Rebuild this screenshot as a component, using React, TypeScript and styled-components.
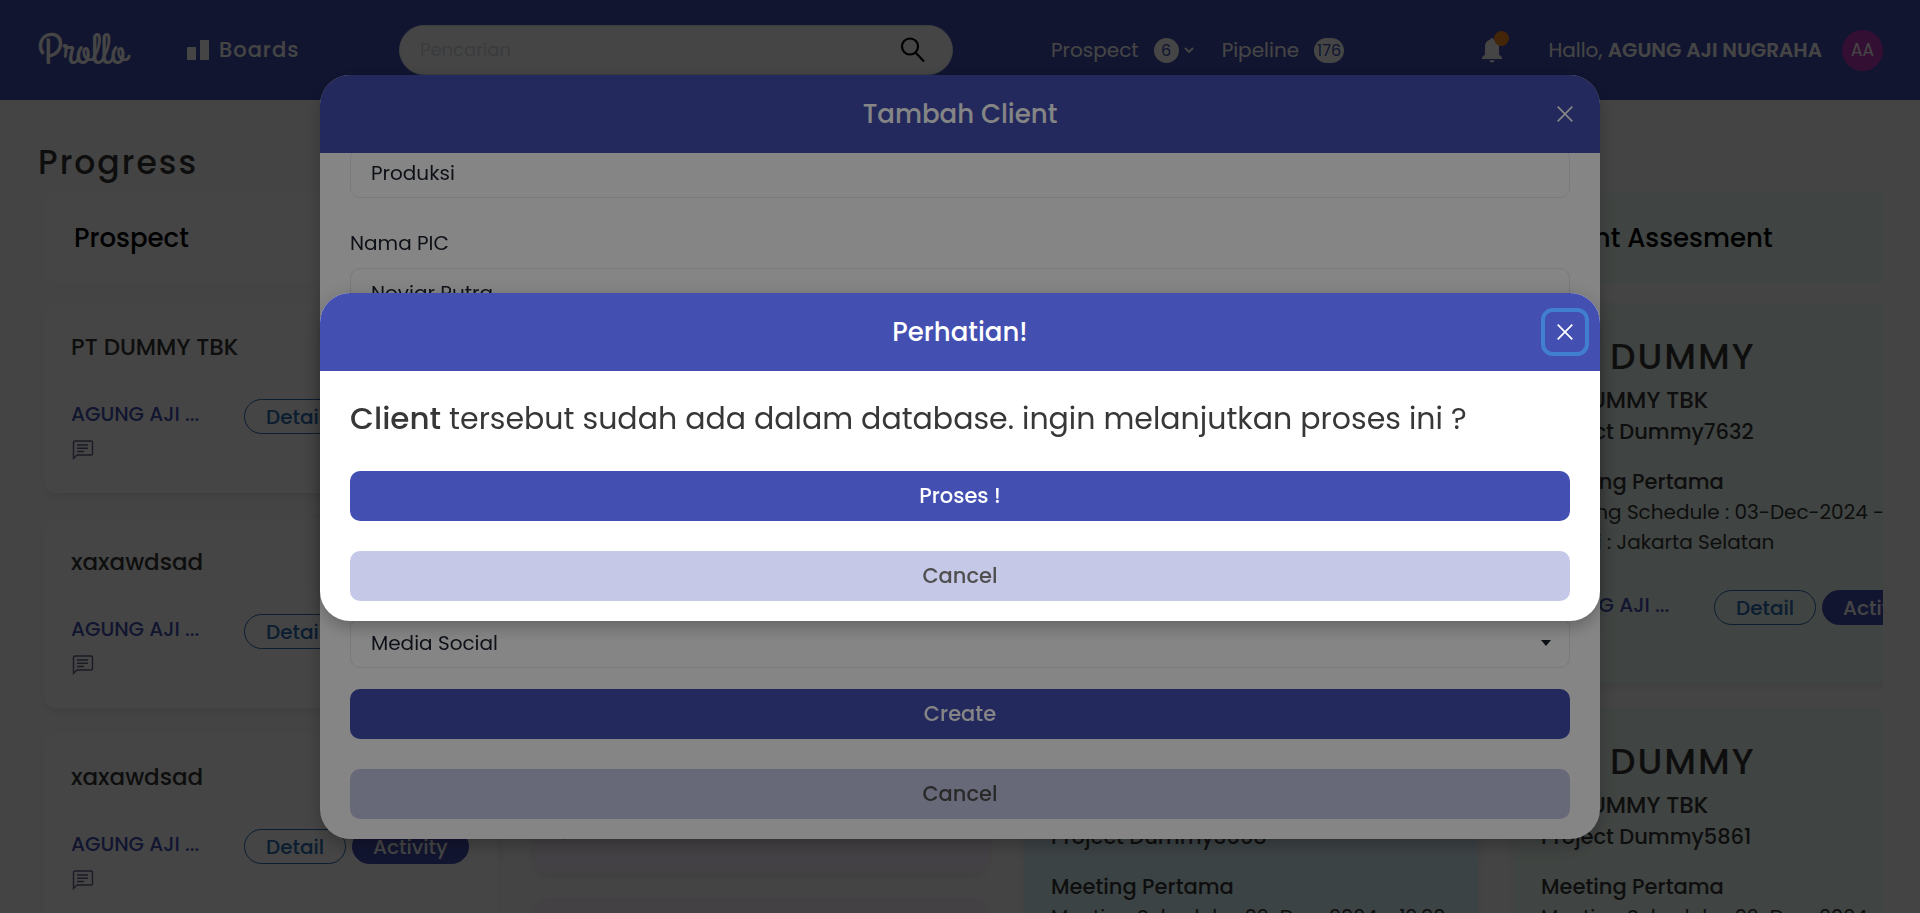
import React from "react";
import styled, { createGlobalStyle, css } from "styled-components";

const GlobalStyle = createGlobalStyle`
  * { box-sizing: border-box; }
  html, body { margin: 0; height: 100%; }
  body {
    overflow: hidden;
    background: #fcfcfc;
    color: #373737;
    font-family: Poppins, Inter, "Liberation Sans", sans-serif;
    font-size: 20px;
    line-height: 30px;
  }
  h1, h2, h3, p { margin: 0; font-weight: 400; }
  button, input, select { font: inherit; color: inherit; }
  button { cursor: pointer; }
  a { color: inherit; text-decoration: none; }
`;

const Page = styled.div`
  height: 100vh;
  overflow: hidden;
`;

const TopBar = styled.header`
  display: flex;
  align-items: center;
  height: 100px;
  padding: 0 37px 0 38px;
  background: #4350b1;
  color: #fff;
`;

const Logo = styled.a`
  width: 149px;
  padding-top: 4px;
  font-family: "Grand Hotel", Norican, Cookie, Satisfy, "Dancing Script", Pacifico, "Liberation Serif", serif;
  font-weight: 400;
  font-size: 43px;
  line-height: 48px;
`;

const BoardsLink = styled.a`
  display: flex;
  align-items: center;
  gap: 10px;
  width: 212px;
  font-size: 21px;
  font-weight: 500;
  letter-spacing: 1px;
`;

const Search = styled.form`
  display: flex;
  align-items: center;
  flex: 0 1 554px;
  height: 50px;
  padding: 0 26px 0 20px;
  border: 1px solid #e2e8f0;
  border-radius: 25px;
  background: #fff;
  color: #000;
`;

const SearchInput = styled.input`
  flex: 1;
  min-width: 0;
  padding: 0;
  border: 0;
  outline: 0;
  background: transparent;
  font-size: 18px;
  &::placeholder { color: #d4dae2; opacity: 1; }
`;

const IconButton = styled.button`
  position: relative;
  display: flex;
  padding: 0;
  border: 0;
  background: transparent;
`;

const Counters = styled.nav`
  display: flex;
  align-items: center;
  gap: 28px;
  margin-left: 98px;
`;

const Counter = styled.a`
  display: flex;
  align-items: center;
`;

const Count = styled.span`
  min-width: 25px;
  margin: 0 5px 0 15px;
  padding: 0 3px;
  border-radius: 13px;
  background: #fff;
  color: #4350b1;
  font-size: 16px;
  line-height: 25px;
  text-align: center;
`;

const Account = styled.div`
  display: flex;
  align-items: center;
  gap: 20px;
  margin-left: auto;
  white-space: nowrap;
  b { font-weight: 600; }
`;

const Bell = styled(IconButton)`
  margin-right: 26px;
`;

const Dot = styled.span`
  position: absolute;
  top: -7px;
  right: -7px;
  width: 15px;
  height: 15px;
  border-radius: 50%;
  background: #f68b1f;
`;

const Avatar = styled.span`
  width: 41px;
  border-radius: 50%;
  background: #c038c0;
  font-size: 17px;
  line-height: 41px;
  text-align: center;
`;

const Main = styled.main`
  padding: 38px 37px 0 38px;
`;

const PageTitle = styled.h1`
  font-size: 33px;
  line-height: 50px;
  font-weight: 500;
  letter-spacing: 2px;
`;

const Board = styled.div`
  display: flex;
  gap: 36px;
  padding: 5px 6px 20px;
  overflow: hidden;
`;

const Column = styled.section`
  flex: 0 0 454px;
  display: flex;
  flex-direction: column;
  gap: 25px;
`;

type Tone = "plain" | "lilac" | "sky" | "mint";
const tones: Record<Tone, string> = {
  plain: "#ffffff",
  lilac: "#faf2ff",
  sky: "#dff8ff",
  mint: "#edfbf4",
};

const ColumnTitle = styled.h2<{ $tone: Tone }>`
  margin-bottom: -5px;
  padding: 0 30px;
  border-radius: 12px;
  background: ${(p) => tones[p.$tone]};
  color: #000;
  font-size: 26px;
  line-height: 90px;
  font-weight: 500;
`;

const Card = styled.article<{ $tone: Tone; $height?: number }>`
  flex: none;
  height: ${(p) => p.$height ?? 190}px;
  padding: 27px;
  border-radius: 12px;
  background: ${(p) => tones[p.$tone]};
  box-shadow: 0 4px 10px rgba(0, 0, 0, 0.08);
  white-space: nowrap;
`;

const CardTitle = styled.h3`
  font-size: 36px;
  line-height: 53px;
  font-weight: 500;
  letter-spacing: 2px;
`;

const Company = styled.p`
  font-size: 23px;
  line-height: 34px;
  font-weight: 500;
`;

const Strong = styled.p`
  font-size: 21px;
  font-weight: 500;
`;

const Meeting = styled.div`
  margin-top: 20px;
`;

const CardFooter = styled.div<{ $gap: number }>`
  display: grid;
  grid-template-columns: 167px auto auto;
  justify-content: start;
  column-gap: 6px;
  margin-top: ${(p) => p.$gap}px;
`;

const Owner = styled.a`
  color: #4350b1;
  font-weight: 500;
`;

const Pill = styled.button<{ $solid?: boolean }>`
  height: 35px;
  padding: 0 21px;
  border: 1px solid #2b6cb0;
  border-radius: 18px;
  background: transparent;
  color: #2b6cb0;
  font-weight: 500;
  line-height: 32px;
  ${(p) => p.$solid && css`
    padding: 0 20px;
    border-color: #4350b1;
    background: #4350b1;
    color: #fff;
  `}
`;

const Overlay = styled.div`
  position: fixed;
  inset: 0;
  display: flex;
  align-items: center;
  justify-content: center;
  background: rgba(0, 0, 0, 0.48);
`;

const Dialog = styled.section`
  display: flex;
  flex-direction: column;
  width: min(1280px, 94vw);
  max-height: calc(100vh - 149px);
  overflow: hidden;
  border-radius: 30px;
  background: #fff;
  box-shadow: 0 10px 15px -3px rgba(0, 0, 0, 0.1), 0 4px 20px rgba(0, 0, 0, 0.2);
`;

const DialogHeader = styled.header`
  position: relative;
  flex: none;
  background: #4350b1;
  color: #fff;
  text-align: center;
`;

const DialogTitle = styled.h2`
  font-size: 26px;
  line-height: 78px;
  font-weight: 500;
`;

const Close = styled.button<{ $focused?: boolean }>`
  position: absolute;
  top: 19px;
  right: 15px;
  display: grid;
  place-items: center;
  width: 40px;
  height: 40px;
  padding: 0;
  border: 0;
  border-radius: 8px;
  outline: 0;
  background: transparent;
  box-shadow: ${(p) => (p.$focused ? "0 0 0 4px #4180d0" : "none")};
`;

const DialogBody = styled.div`
  display: flex;
  flex-direction: column;
  padding: 25px 30px 20px;
`;

const FormBody = styled.form`
  display: flex;
  flex-direction: column;
  justify-content: flex-end;
  min-height: 0;
  padding: 0 30px 20px;
  overflow: hidden;
  color: #1a202c;
`;

const Field = styled.label<{ $space?: number }>`
  display: flex;
  flex: none;
  flex-direction: column;
  gap: 10px;
  margin-bottom: ${(p) => p.$space ?? 30}px;
`;

const control = css`
  width: 100%;
  height: 50px;
  padding: 0 20px;
  border: 1px solid #e2e8f0;
  border-radius: 10px;
  background-color: #fff;
`;

const TextInput = styled.input`
  ${control}
`;

const SelectWrap = styled.span`
  position: relative;
  display: block;
  svg {
    position: absolute;
    top: 22px;
    right: 19px;
  }
`;

const Select = styled.select`
  ${control}
  appearance: none;
`;

const Question = styled.p`
  margin-bottom: 29px;
  font-size: 30px;
  line-height: 46px;
  b {
    font-size: 31px;
    font-weight: 500;
    line-height: 40px;
  }
`;

const WideButton = styled.button<{ $quiet?: boolean }>`
  flex: none;
  height: 50px;
  border: 0;
  border-radius: 10px;
  background: ${(p) => (p.$quiet ? "#c6c8e7" : "#4350b1")};
  color: ${(p) => (p.$quiet ? "#4f4f4f" : "#fff")};
  font-size: 21px;
  font-weight: 500;
  & + & { margin-top: 30px; }
`;

const CloseIcon = () => (
  <svg width="16" height="16" viewBox="0 0 16 16" stroke="currentColor" strokeWidth="1.7" aria-hidden="true">
    <path d="M.7 .7l14.600 14.600M15.300 .7L.7 15.300" />
  </svg>
);

const ChatIcon = () => (
  <svg width="22" height="20" viewBox="0 0 22 20" fill="none" stroke="#64648a" strokeWidth="1.4" aria-hidden="true">
    <path d="M1.500 18.500V2.500a1.500 1.500 0 0 1 1.500-1.500h16a1.500 1.500 0 0 1 1.500 1.500v11a1.500 1.500 0 0 1-1.500 1.500H5zM5 5h11M5 8.300h11M5 11.500h7" />
  </svg>
);

function OwnerRow({ gap }: { gap: number }) {
  return (
    <CardFooter $gap={gap}>
      <Owner href="#">AGUNG AJI ...</Owner>
      <Pill type="button">Detail</Pill>
      <Pill type="button" $solid>Activity</Pill>
    </CardFooter>
  );
}

const ChatButton = styled(IconButton)`
  margin: 6px 0 0 1px;
`;

function ProspectCard({ name, tone = "plain" }: { name: string; tone?: Tone }) {
  return (
    <Card $tone={tone}>
      <Company>{name}</Company>
      <OwnerRow gap={35} />
      <ChatButton type="button" aria-label="Komentar"><ChatIcon /></ChatButton>
    </Card>
  );
}

interface MeetingInfo {
  project: string;
  schedule: string;
  tone: Tone;
}

function MeetingCard({ project, schedule, tone }: MeetingInfo) {
  return (
    <Card $tone={tone} $height={380}>
      <CardTitle>MY DUMMY</CardTitle>
      <Company>PT DUMMY TBK</Company>
      <Strong>{project}</Strong>
      <Meeting>
        <Strong>Meeting Pertama</Strong>
        <p>Meeting Schedule : {schedule}</p>
        <p>Lokasi : Jakarta Selatan</p>
      </Meeting>
      <OwnerRow gap={33} />
    </Card>
  );
}

export default function App() {
  return (
    <>
      <GlobalStyle />
      <Page>
        <TopBar>
          <Logo href="#">Prollo</Logo>
          <BoardsLink href="#">
            <svg width="22" height="25" viewBox="0 0 22 25" fill="currentColor" aria-hidden="true">
              <rect y="9" width="9" height="13" rx="1" />
              <rect x="13" y="2" width="9" height="20" rx="1" />
            </svg>
            Boards
          </BoardsLink>
          <Search>
            <SearchInput aria-label="Pencarian" placeholder="Pencarian" />
            <IconButton type="button" aria-label="Cari">
              <svg width="26" height="26" viewBox="0 0 26 26" fill="none" stroke="currentColor" strokeWidth="2.200">
                <circle cx="10" cy="9.500" r="8" />
                <path d="M15.500 15.500l8.500 9" />
              </svg>
            </IconButton>
          </Search>
          <Counters>
            <Counter href="#">
              Prospect <Count>6</Count>
              <svg width="10" height="7" viewBox="0 0 10 7" fill="none" stroke="currentColor" strokeWidth="1.800">
                <path d="M1 1l4 4 4-4" />
              </svg>
            </Counter>
            <Counter href="#">Pipeline <Count>176</Count></Counter>
          </Counters>
          <Account>
            <Bell type="button" aria-label="Notifikasi">
              <svg width="20" height="25" viewBox="0 0 20 25" fill="#fff">
                <path d="M10 0c-.9 0-1.500.6-1.500 1.500C5.200 2.200 3 5 3 8.500V16.500L0 19.500V21h20v-1.500L17 16.500V8.500C17 5 14.800 2.200 11.500 1.500 11.500.6 10.900 0 10 0zM7.500 22.300a2.500 2.300 0 0 0 5 0z" />
              </svg>
              <Dot />
            </Bell>
            <span>Hallo, <b>AGUNG AJI NUGRAHA</b></span>
            <Avatar>AA</Avatar>
          </Account>
        </TopBar>
        <Main>
          <PageTitle>Progress</PageTitle>
          <Board>
            <Column>
              <ColumnTitle $tone="plain">Prospect</ColumnTitle>
              <ProspectCard name="PT DUMMY TBK" />
              <ProspectCard name="xaxawdsad" />
              <ProspectCard name="xaxawdsad" />
            </Column>
            <Column>
              <ColumnTitle $tone="lilac">Meeting</ColumnTitle>
              <Card $tone="lilac" $height={355} />
              <ProspectCard tone="lilac" name="PT DUMMY TBK" />
              <Card $tone="lilac" />
            </Column>
            <Column>
              <ColumnTitle $tone="sky">Meeting</ColumnTitle>
              <MeetingCard tone="sky" project="Project Dummy3663" schedule="03-Dec-2024 - 12:30" />
              <MeetingCard tone="sky" project="Project Dummy3668" schedule="02-Dec-2024 - 12:30" />
            </Column>
            <Column>
              <ColumnTitle $tone="mint">Client Assesment</ColumnTitle>
              <MeetingCard tone="mint" project="Project Dummy7632" schedule="03-Dec-2024 - 10:30" />
              <MeetingCard tone="mint" project="Project Dummy5861" schedule="02-Dec-2024 - 10:30" />
            </Column>
          </Board>
        </Main>
      </Page>

      <Overlay>
        <Dialog role="dialog" aria-label="Tambah Client">
          <DialogHeader>
            <DialogTitle>Tambah Client</DialogTitle>
            <Close type="button" aria-label="Tutup"><CloseIcon /></Close>
          </DialogHeader>
          <FormBody>
            <Field>Bidang Usaha<TextInput defaultValue="Produksi" /></Field>
            <Field>Nama PIC<TextInput defaultValue="Noviar Putra" /></Field>
            <Field>Jabatan PIC<TextInput /></Field>
            <Field $space={20}>Email PIC<TextInput /></Field>
            <Field $space={21}>
              Sumber
              <SelectWrap>
                <Select defaultValue="Media Social"><option>Media Social</option></Select>
                <svg width="10" height="6" viewBox="0 0 10 6" fill="currentColor"><path d="M0 0h10L5 6z" /></svg>
              </SelectWrap>
            </Field>
            <WideButton type="button">Create</WideButton>
            <WideButton type="button" $quiet>Cancel</WideButton>
          </FormBody>
        </Dialog>
      </Overlay>

      <Overlay>
        <Dialog role="alertdialog" aria-label="Perhatian!">
          <DialogHeader>
            <DialogTitle>Perhatian!</DialogTitle>
            <Close type="button" aria-label="Tutup" $focused><CloseIcon /></Close>
          </DialogHeader>
          <DialogBody>
            <Question>
              <b>Client</b> tersebut sudah ada dalam database. ingin melanjutkan proses ini ?
            </Question>
            <WideButton type="button">Proses !</WideButton>
            <WideButton type="button" $quiet>Cancel</WideButton>
          </DialogBody>
        </Dialog>
      </Overlay>
    </>
  );
}
